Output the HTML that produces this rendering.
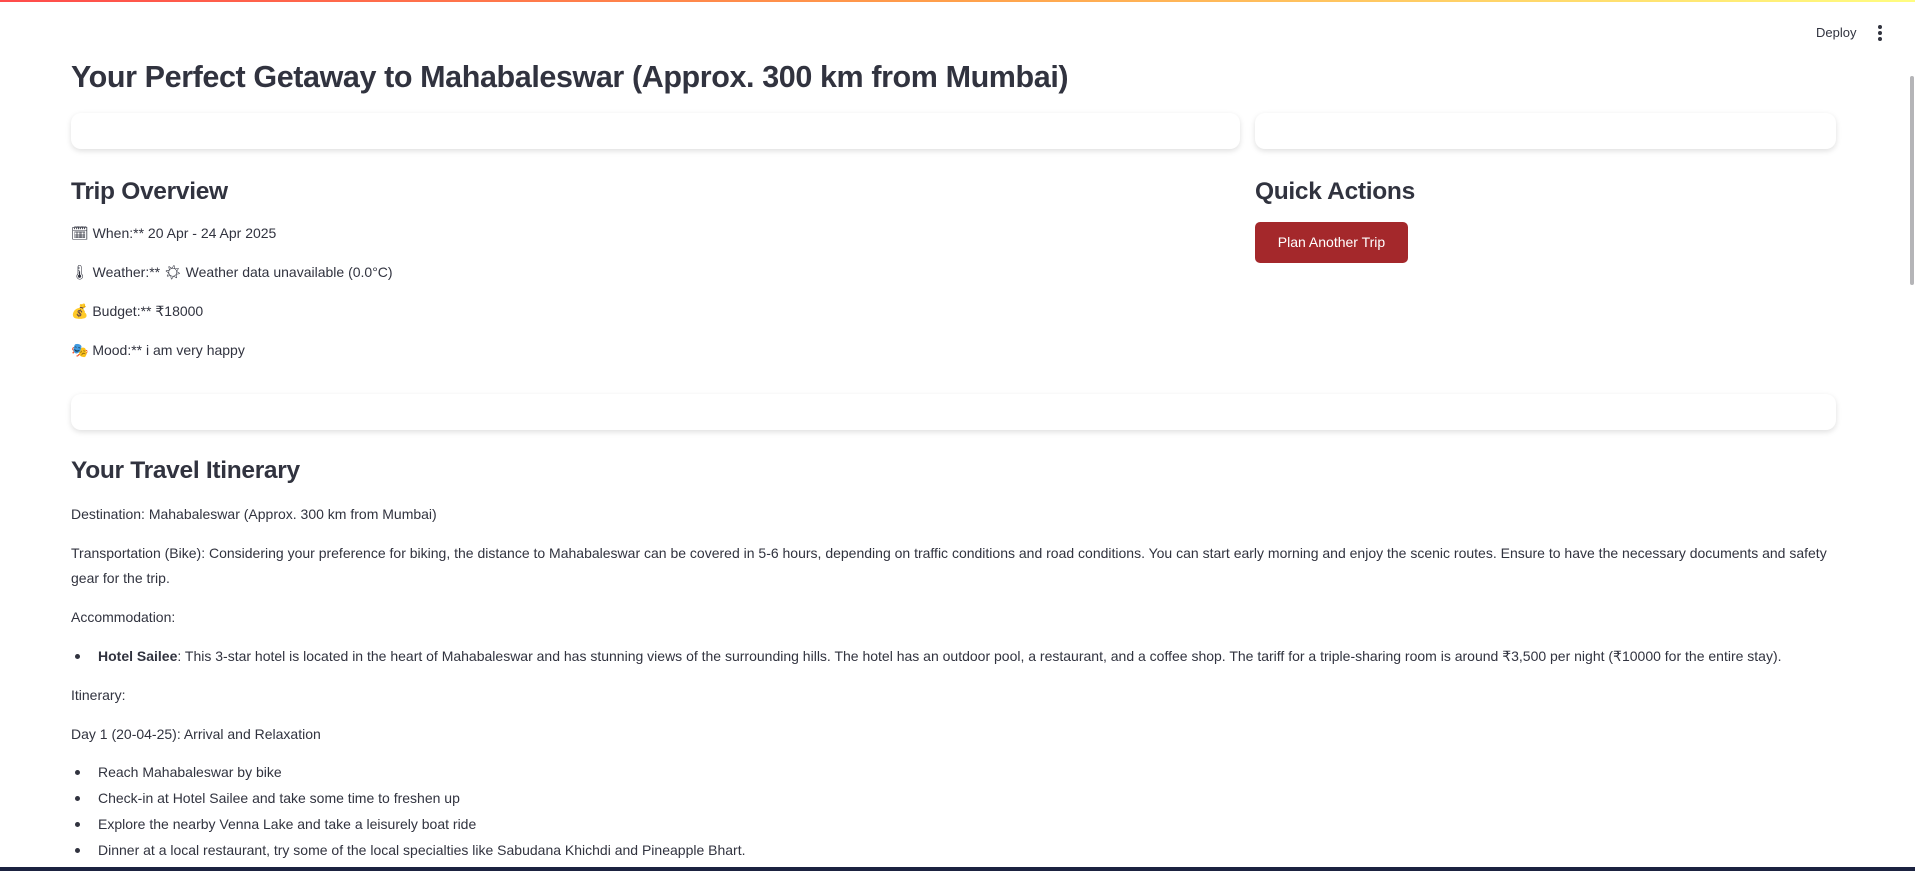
<!DOCTYPE html>
<html><head><meta charset="utf-8"><style>
*{margin:0;padding:0;box-sizing:border-box}
html,body{width:1915px;height:871px;overflow:hidden;background:#fff;font-family:"Liberation Sans",sans-serif;color:#31333f}
.top{position:absolute;left:0;top:0;width:1915px;height:2px;background:linear-gradient(90deg,#ff4b4b,#ffa04b 50%,#fffd80)}
.bot{position:absolute;left:0;top:867px;width:1915px;height:4px;background:#1b2240}
.abs{position:absolute;white-space:nowrap}
.card{position:absolute;background:#fff;border-radius:10px;box-shadow:0 2px 6px rgba(0,0,0,.13)}
h1{font-size:30.5px;font-weight:700;letter-spacing:-.4px}
h2{font-size:24.5px;font-weight:700;letter-spacing:-.3px}
.t{font-size:14px}
.dot{position:absolute;width:5px;height:5px;border-radius:50%;background:#31333f}
</style></head><body>
<div class="top"></div>
<div class="abs t" style="left:1816px;top:25px;font-size:13px;color:#31333f">Deploy</div>
<div class="abs" style="left:1878px;top:25px;width:4px">
<div style="width:4px;height:4px;border-radius:50%;background:#31333f;margin-bottom:2px"></div>
<div style="width:4px;height:4px;border-radius:50%;background:#31333f;margin-bottom:2px"></div>
<div style="width:4px;height:4px;border-radius:50%;background:#31333f"></div></div>
<div style="position:absolute;left:1910px;top:76px;width:4px;height:209px;background:#b5b5b8;border-radius:2px"></div>

<h1 class="abs" style="left:71px;top:60px">Your Perfect Getaway to Mahabaleswar (Approx. 300 km from Mumbai)</h1>
<div class="card" style="left:71px;top:113px;width:1169px;height:36px"></div>
<div class="card" style="left:1255px;top:113px;width:581px;height:36px"></div>

<h2 class="abs" style="left:71px;top:178px">Trip Overview</h2>
<div class="abs t" style="left:71px;top:225px">🗓 When:** 20 Apr - 24 Apr 2025</div>
<div class="abs t" style="left:71px;top:264px">🌡 Weather:** ☀ Weather data unavailable (0.0°C)</div>
<div class="abs t" style="left:71px;top:303px">💰 Budget:** ₹18000</div>
<div class="abs t" style="left:71px;top:342px">🎭 Mood:** i am very happy</div>

<h2 class="abs" style="left:1255px;top:178px">Quick Actions</h2>
<div style="position:absolute;left:1255px;top:222px;width:153px;height:41px;background:#a4282b;border-radius:5px;color:#fff;font-size:14px;text-align:center;line-height:41px">Plan Another Trip</div>

<div class="card" style="left:71px;top:394px;width:1765px;height:36px"></div>

<h2 class="abs" style="left:71px;top:457px">Your Travel Itinerary</h2>
<div class="abs t" style="left:71px;top:506px">Destination: Mahabaleswar (Approx. 300 km from Mumbai)</div>
<div class="abs t" style="left:71px;top:545px">Transportation (Bike): Considering your preference for biking, the distance to Mahabaleswar can be covered in 5-6 hours, depending on traffic conditions and road conditions. You can start early morning and enjoy the scenic routes. Ensure to have the necessary documents and safety</div>
<div class="abs t" style="left:71px;top:570px">gear for the trip.</div>
<div class="abs t" style="left:71px;top:609px">Accommodation:</div>
<div class="dot" style="left:75px;top:654px"></div>
<div class="abs t" style="left:98px;top:648px"><b>Hotel Sailee</b>: This 3-star hotel is located in the heart of Mahabaleswar and has stunning views of the surrounding hills. The hotel has an outdoor pool, a restaurant, and a coffee shop. The tariff for a triple-sharing room is around ₹3,500 per night (₹10000 for the entire stay).</div>
<div class="abs t" style="left:71px;top:687px">Itinerary:</div>
<div class="abs t" style="left:71px;top:726px">Day 1 (20-04-25): Arrival and Relaxation</div>
<div class="dot" style="left:75px;top:770px"></div><div class="abs t" style="left:98px;top:764px">Reach Mahabaleswar by bike</div>
<div class="dot" style="left:75px;top:796px"></div><div class="abs t" style="left:98px;top:790px">Check-in at Hotel Sailee and take some time to freshen up</div>
<div class="dot" style="left:75px;top:822px"></div><div class="abs t" style="left:98px;top:816px">Explore the nearby Venna Lake and take a leisurely boat ride</div>
<div class="dot" style="left:75px;top:848px"></div><div class="abs t" style="left:98px;top:842px">Dinner at a local restaurant, try some of the local specialties like Sabudana Khichdi and Pineapple Bhart.</div>
<div class="bot"></div>
</body></html>
